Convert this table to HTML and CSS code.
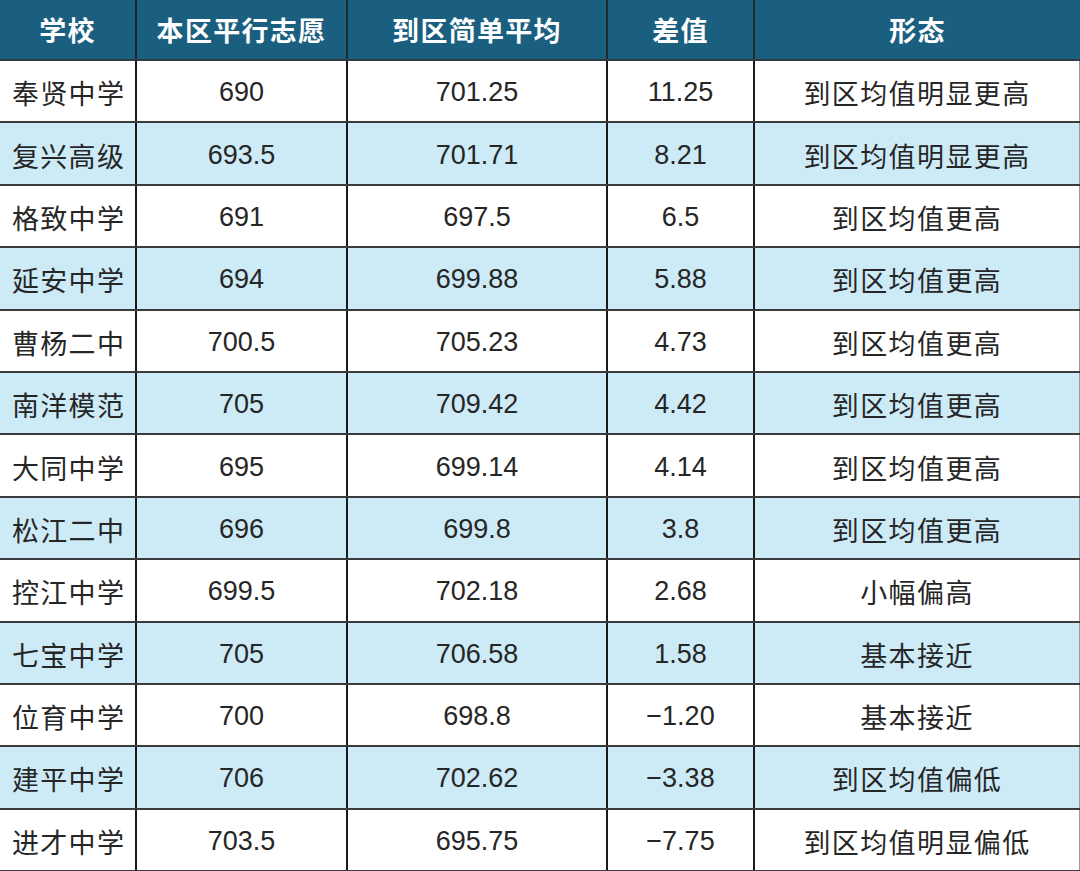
FILE: index.html
```html
<!DOCTYPE html>
<html lang="zh">
<head>
<meta charset="utf-8">
<link rel="stylesheet" href="styles.css">
</head>
<body>
<table class="grid">
  <colgroup>
    <col class="c1"><col class="c2"><col class="c3"><col class="c4"><col class="c5">
  </colgroup>
  <thead>
    <tr><th>学校</th><th>本区平行志愿</th><th>到区简单平均</th><th>差值</th><th>形态</th></tr>
  </thead>
  <tbody>
    <tr><td class="name">奉贤中学</td><td>690</td><td>701.25</td><td>11.25</td><td class="state">到区均值明显更高</td></tr>
    <tr class="alt"><td class="name">复兴高级</td><td>693.5</td><td>701.71</td><td>8.21</td><td class="state">到区均值明显更高</td></tr>
    <tr><td class="name">格致中学</td><td>691</td><td>697.5</td><td>6.5</td><td class="state">到区均值更高</td></tr>
    <tr class="alt"><td class="name">延安中学</td><td>694</td><td>699.88</td><td>5.88</td><td class="state">到区均值更高</td></tr>
    <tr><td class="name">曹杨二中</td><td>700.5</td><td>705.23</td><td>4.73</td><td class="state">到区均值更高</td></tr>
    <tr class="alt"><td class="name">南洋模范</td><td>705</td><td>709.42</td><td>4.42</td><td class="state">到区均值更高</td></tr>
    <tr><td class="name">大同中学</td><td>695</td><td>699.14</td><td>4.14</td><td class="state">到区均值更高</td></tr>
    <tr class="alt"><td class="name">松江二中</td><td>696</td><td>699.8</td><td>3.8</td><td class="state">到区均值更高</td></tr>
    <tr><td class="name">控江中学</td><td>699.5</td><td>702.18</td><td>2.68</td><td class="state">小幅偏高</td></tr>
    <tr class="alt"><td class="name">七宝中学</td><td>705</td><td>706.58</td><td>1.58</td><td class="state">基本接近</td></tr>
    <tr><td class="name">位育中学</td><td>700</td><td>698.8</td><td>−1.20</td><td class="state">基本接近</td></tr>
    <tr class="alt"><td class="name">建平中学</td><td>706</td><td>702.62</td><td>−3.38</td><td class="state">到区均值偏低</td></tr>
    <tr><td class="name">进才中学</td><td>703.5</td><td>695.75</td><td>−7.75</td><td class="state">到区均值明显偏低</td></tr>
  </tbody>
</table>
</body>
</html>
```
FILE: styles.css
```css
html, body {
  margin: 0;
  padding: 0;
  background: #ffffff;
}
body {
  width: 1080px;
  height: 871px;
  overflow: hidden;
  font-family: "Liberation Sans", "Noto Sans CJK SC", sans-serif;
}
.grid {
  width: 1080px;
  border-collapse: collapse;
  table-layout: fixed;
}
.c1 { width: 136px; }
.c2 { width: 211px; }
.c3 { width: 260px; }
.c4 { width: 147px; }
.c5 { width: 326px; }
.grid th {
  background: #1b5f80;
  color: #ffffff;
  font-weight: bold;
  font-size: 27px;
  height: 59px;
  padding: 0;
  text-align: center;
  border-left: 2px solid #1e2a30;
  border-bottom: 2px solid #2f3b40;
  letter-spacing: 1.3px;
}
.grid td {
  height: 62.4px;
  padding: 3px 0 0 0;
  box-sizing: border-box;
  font-size: 27px;
  color: #262626;
  text-align: center;
  border-left: 2px solid #1a1a1a;
  border-bottom: 2px solid #3b3b3b;
}
.grid th:first-child,
.grid td:first-child {
  border-left: none;
}
.grid td:last-child {
  border-right: 2px solid #9a9a9a;
}
.grid td.name {
  text-align: left;
  padding-left: 12px;
  letter-spacing: 1.3px;
}
.grid td.state {
  letter-spacing: 1.4px;
}
.grid tr.alt td {
  background: #cdeaf7;
}
```
